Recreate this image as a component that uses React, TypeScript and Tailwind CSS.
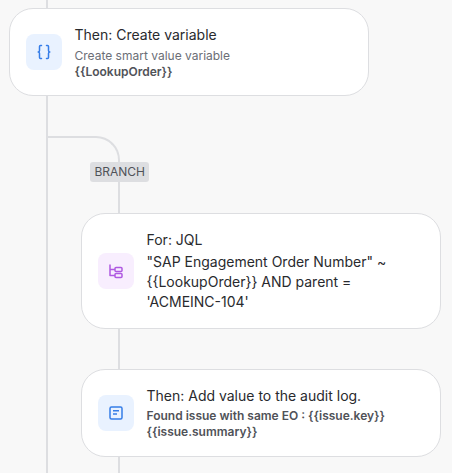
export default function App() {
  const font = { fontFamily: '"Inter", "Liberation Sans", sans-serif' };
  return (
    <div style={font} className="relative w-[452px] h-[473px] overflow-hidden bg-[#f8f8f8] pt-[8px] pl-[9px]">
      <div className="absolute left-[46px] top-0 bottom-0 w-[2px] bg-[#dddee1]" />
      <div className="relative w-[360px] h-[88px] rounded-[24px] border border-[#dddee1] bg-white flex items-center pl-[16px] pr-4">
        <div className="w-[36px] h-[36px] rounded-[8px] bg-[#e9f2ff] flex items-center justify-center shrink-0">
          <svg width="16" height="16" viewBox="0 0 16 16" fill="none" stroke="#357de8" strokeWidth="1.5" strokeLinecap="round" strokeLinejoin="round">
            <path d="M5.5 1.5H4.5Q3.5 1.5 3.5 2.5V6.5Q3.5 8 2.2 8Q3.5 8 3.5 9.5V13.5Q3.5 14.5 4.5 14.5H5.5" />
            <path d="M10.5 1.5H11.5Q12.5 1.5 12.5 2.5V6.5Q12.5 8 13.8 8Q12.5 8 12.5 9.5V13.5Q12.5 14.5 11.5 14.5H10.5" />
          </svg>
        </div>
        <div className="ml-[12.5px] flex flex-col">
          <div className="text-[14px] leading-[20px] text-[#292a2e]">Then: Create variable</div>
          <div className="text-[12px] leading-[16px] text-[#6b6e76] mt-[3px]">Create smart value variable</div>
          <div className="text-[12px] leading-[16px] font-semibold text-[#505258]">{"{{LookupOrder}}"}</div>
        </div>
      </div>
      <div className="relative ml-[38px] mt-[40px] w-[73px] h-[77px] border-t-2 border-r-2 border-[#dddee1] rounded-tr-[24px]">
        <div className="absolute right-[-31px] top-[24px] h-[20px] px-[4px] rounded-[3px] bg-[#dddee1] text-[12px] leading-[20px] text-[#505258]">BRANCH</div>
      </div>
      <div className="relative ml-[72px] w-[360px] h-[116px] rounded-[24px] border border-[#dddee1] bg-white flex items-center pl-[16px] pr-4">
        <div className="w-[36px] h-[36px] rounded-[8px] bg-[#f8eefe] flex items-center justify-center shrink-0">
          <svg width="16" height="16" viewBox="0 0 16 16" fill="none" stroke="#af59e1" strokeWidth="1.5" strokeLinejoin="round">
            <path d="M2 1.5V12.5H7M2 6.5H7" />
            <rect x="7" y="4.5" width="7" height="4" rx="1" />
            <rect x="7" y="10.5" width="7" height="4" rx="1" />
          </svg>
        </div>
        <div className="ml-[12.5px] flex flex-col">
          <div className="text-[14px] leading-[20px] text-[#292a2e] mb-[2px]">For: JQL</div>
          <div className="text-[14px] leading-[20px] text-[#292a2e]">"SAP Engagement Order Number" ~ {"{{LookupOrder}}"} AND parent = 'ACMEINC-104'</div>
        </div>
      </div>
      <div className="ml-[109px] w-[2px] h-[40px] bg-[#dddee1]" />
      <div className="relative ml-[72px] w-[360px] h-[88px] rounded-[24px] border border-[#dddee1] bg-white flex items-center pl-[16px] pr-4">
        <div className="w-[36px] h-[36px] rounded-[8px] bg-[#e9f2ff] flex items-center justify-center shrink-0">
          <svg width="16" height="16" viewBox="0 0 16 16" fill="none" stroke="#357de8" strokeWidth="1.5">
            <rect x="2" y="2" width="12" height="12" rx="1.5" />
            <path d="M5 5.75H11M5 9H9" />
          </svg>
        </div>
        <div className="ml-[12.5px] flex flex-col">
          <div className="text-[14px] leading-[20px] text-[#292a2e]">Then: Add value to the audit log.</div>
          <div className="text-[12px] leading-[16px] font-semibold text-[#505258] mt-[2px]">Found issue with same EO : {"{{issue.key}}"} {"{{issue.summary}}"}</div>
        </div>
      </div>
      <div className="ml-[109px] w-[2px] h-[40px] bg-[#dddee1]" />
    </div>
  );
}
